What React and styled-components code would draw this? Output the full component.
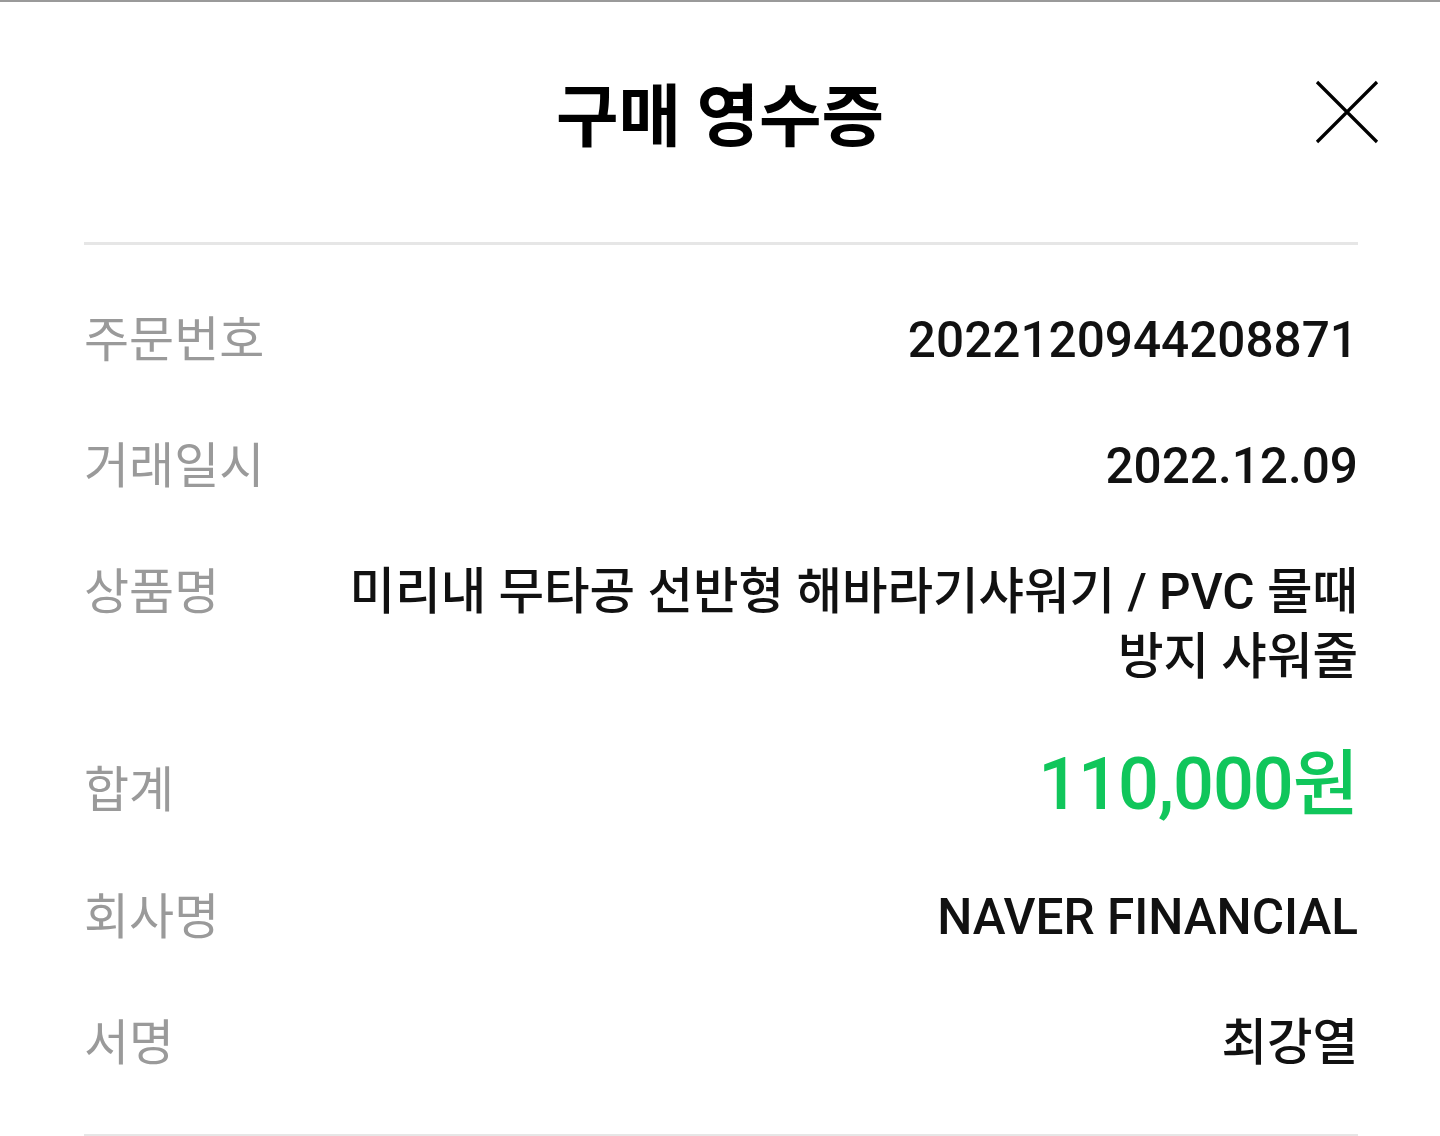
import React from "react";
import styled, { createGlobalStyle } from "styled-components";

const Global = createGlobalStyle`
  html, body { margin: 0; padding: 0; background: #fff; }
  body { font-family: "Roboto", "Noto Sans CJK KR", sans-serif; }
`;

const Page = styled.div`
  width: 1440px;
  min-height: 1136px;
  box-sizing: border-box;
  border-top: 2px solid #9a9a9a;
  background: #fff;
  display: flex;
  flex-direction: column;
`;

const Header = styled.header`
  position: relative;
  height: 240px;
  display: flex;
  align-items: flex-start;
  justify-content: center;
  padding-top: 68px;
  box-sizing: border-box;
`;

const Title = styled.h1`
  margin: 0;
  font-family: "Noto Sans CJK KR", sans-serif;
  font-weight: 700;
  font-size: 68px;
  line-height: 84px;
  color: #000;
  letter-spacing: 0;
`;

const CloseButton = styled.button`
  position: absolute;
  top: 76px;
  right: 59px;
  width: 68px;
  height: 68px;
  border: 0;
  padding: 0;
  background: transparent;
  display: flex;
  align-items: center;
  justify-content: center;
  cursor: pointer;
`;

const Body = styled.section`
  margin: 0 82px 0 84px;
  border-top: 3px solid #e6e6e6;
  border-bottom: 3px solid #e6e6e6;
  padding: 58px 0 58px;
  display: flex;
  flex-direction: column;
  gap: 56px;
`;

const Row = styled.div`
  display: flex;
  align-items: ${(p) => (p.$center ? "center" : "baseline")};
  justify-content: space-between;
  gap: 40px;
`;

const Label = styled.div`
  flex: none;
  font-family: "Noto Sans CJK KR", sans-serif;
  font-weight: 400;
  font-size: 49px;
  line-height: 65px;
  color: #9a9a9a;
`;

const Value = styled.div`
  flex: 1;
  text-align: right;
  font-family: "Roboto", "Noto Sans CJK KR", sans-serif;
  font-weight: 500;
  font-size: ${(p) => (p.$big ? "72px" : "49.5px")};
  line-height: ${(p) => (p.$big ? "78px" : "65px")};
  color: ${(p) => (p.$accent ? "#10c65b" : "#111")};
  letter-spacing: ${(p) => (p.$big ? "-1px" : "0")};
  word-break: keep-all;
  max-width: ${(p) => p.$max || "none"};
  margin-left: auto;
`;

const rows = [
  { label: "주문번호", value: "2022120944208871" },
  { label: "거래일시", value: "2022.12.09" },
  { label: "상품명", value: "미리내 무타공 선반형 해바라기샤워기 / PVC 물때 방지 샤워줄", max: "1040px" },
  { label: "합계", value: "110,000원", big: true, accent: true },
  { label: "회사명", value: "NAVER FINANCIAL" },
  { label: "서명", value: "최강열" },
];

export default function App() {
  return (
    <>
      <Global />
      <Page>
        <Header>
          <Title>구매 영수증</Title>
          <CloseButton aria-label="닫기">
            <svg width="64" height="64" viewBox="0 0 64 64">
              <path d="M2 2 L62 62 M62 2 L2 62" stroke="#000" strokeWidth="3.2" fill="none" />
            </svg>
          </CloseButton>
        </Header>
        <Body>
          {rows.map((r) => (
            <Row key={r.label} $center={r.big}>
              <Label>{r.label}</Label>
              <Value $big={r.big} $accent={r.accent} $max={r.max}>
                {r.value}
              </Value>
            </Row>
          ))}
        </Body>
      </Page>
    </>
  );
}
